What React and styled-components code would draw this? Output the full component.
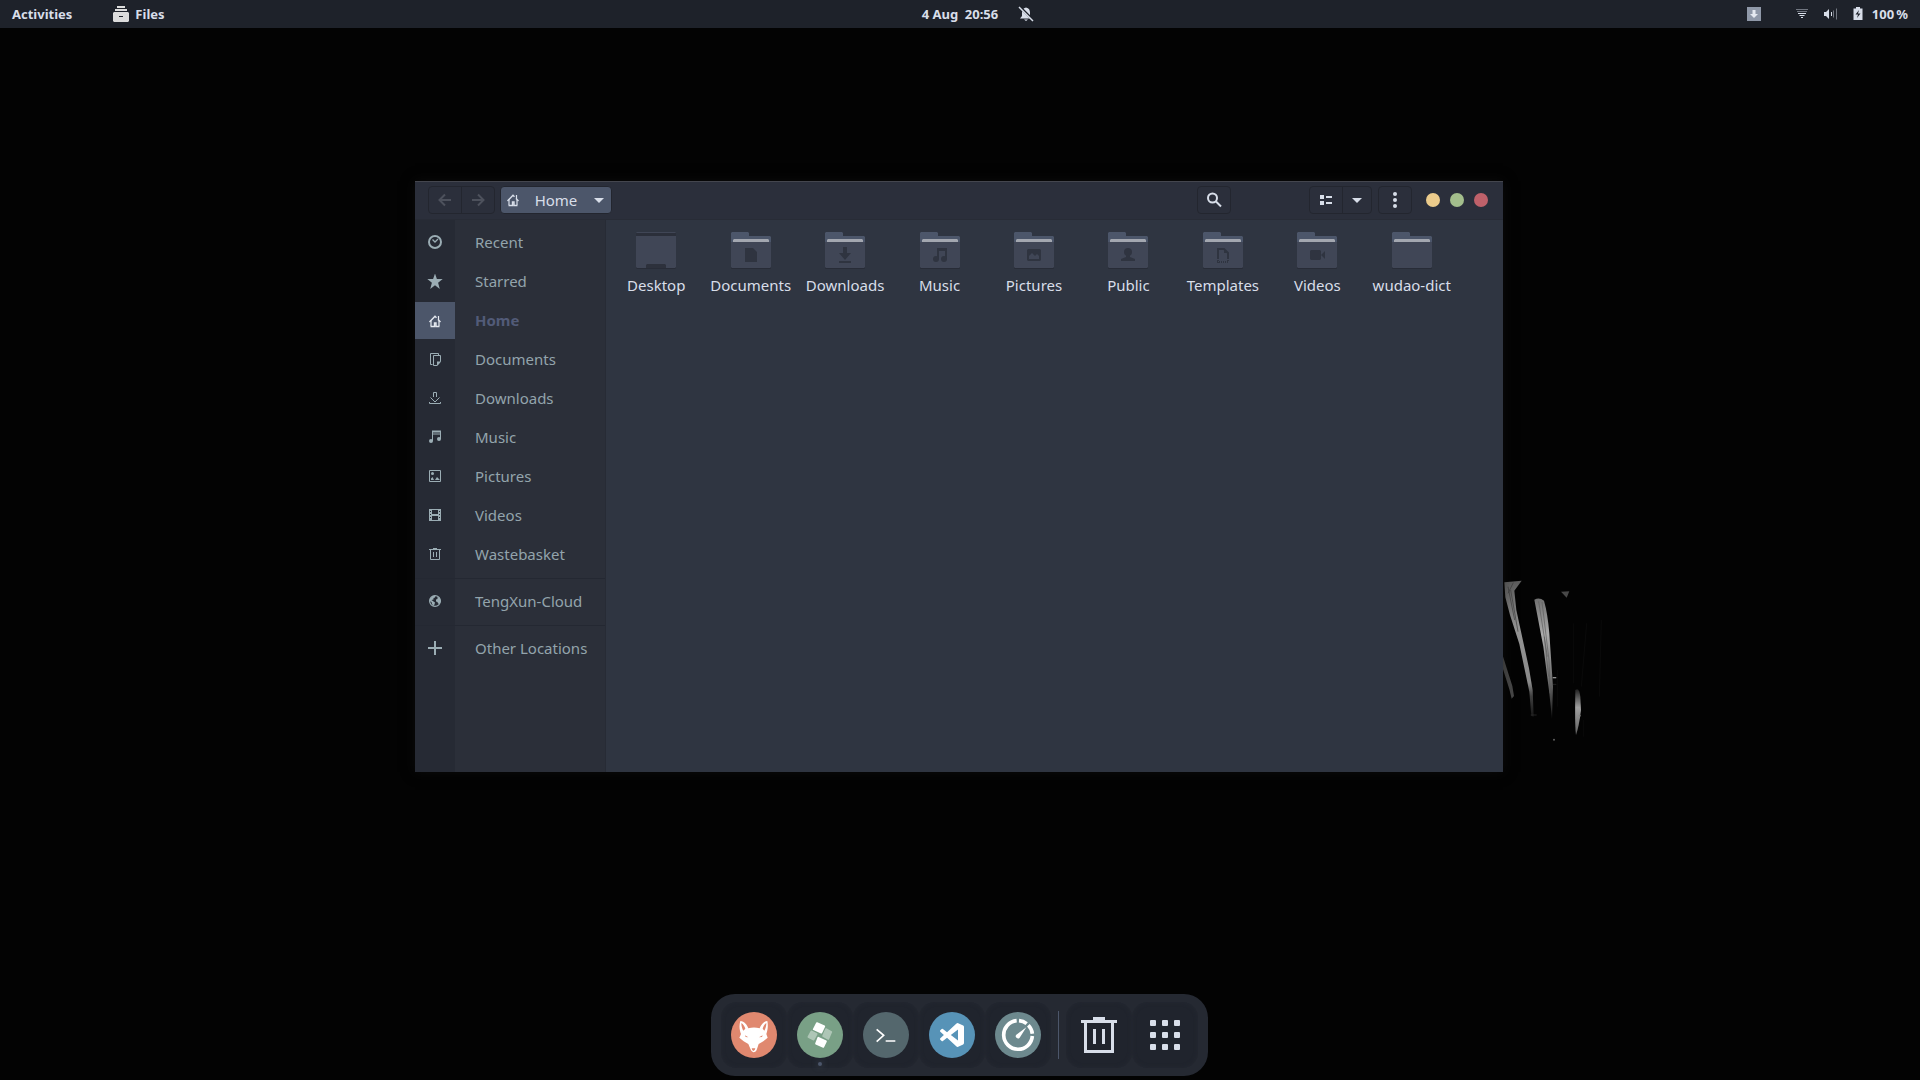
import React from "react";
import styled, { createGlobalStyle } from "styled-components";

const GlobalStyle = createGlobalStyle`
  * { box-sizing: border-box; }
  body { margin: 0; background: #030303; }
  button, a { font: inherit; color: inherit; text-decoration: none; }
  button { margin: 0; padding: 0; border: 0; background: none; cursor: pointer; }
  svg { display: block; flex: none; }
`;

const Screen = styled.div`
  display: flex;
  flex-direction: column;
  min-height: 100vh;
  overflow: hidden;
  background: #030303;
  font-family: "Noto Sans", sans-serif;
  font-size: 15px;
  color: #d8dee9;
`;

/* ---------- top panel ---------- */

const Panel = styled.header`
  display: grid;
  grid-template-columns: 1fr auto 1fr;
  align-items: center;
  height: 28px;
  padding: 0 12px;
  background: #1e222a;
  font-size: 13px;
  font-weight: 700;
  color: #d8dee9;
`;

const PanelGroup = styled.div`
  display: flex;
  align-items: center;
  justify-content: ${(p) => (p.$end ? "flex-end" : "flex-start")};
  gap: ${(p) => p.$gap}px;
`;

const PanelButton = styled.button`
  display: flex;
  align-items: center;
  gap: 6px;
  line-height: 28px;
  white-space: pre;
`;

const Clock = styled(PanelButton)`
  gap: 20px;
  padding-left: 36px;
`;

const TrayGap = styled.span`
  width: 9px;
`;

/* ---------- desktop ---------- */

const Desktop = styled.main`
  position: relative;
  flex: 1;
  display: flex;
  flex-direction: column;
  justify-content: flex-end;
  align-items: center;
  padding: 0 1px 4px 0;
`;

const Wallpaper = styled.svg`
  position: absolute;
  left: 1480px;
  top: 532px;
`;

const Window = styled.section`
  position: absolute;
  left: 415px;
  top: 153px;
  width: calc(100vw - 832px);
  height: calc(100vh - 489px);
  display: flex;
  flex-direction: column;
  background: #2f3541;
  box-shadow: 0 0 12px rgba(20, 20, 20, 0.5);
`;

const HeaderBar = styled.div`
  display: flex;
  align-items: center;
  height: 39px;
  flex: none;
  padding: 0 15px 1px 13px;
  background: #2b2f3b;
  border-top: 1px solid #44464e;
  border-bottom: 1px solid #282c36;
`;

const ButtonGroup = styled.div`
  display: flex;
  height: 28px;
  border: 1px solid #23262f;
  border-radius: 4px;
  margin-right: ${(p) => p.$after || 0}px;
`;

const ToolButton = styled.button`
  display: flex;
  align-items: center;
  justify-content: center;
  width: ${(p) => (p.$narrow ? 28 : 32)}px;
  color: ${(p) => (p.disabled ? "#4d515c" : "#d8dee9")};
  & + & { border-left: 1px solid #23262f; box-sizing: content-box; }
`;

const PathButton = styled.button`
  display: flex;
  align-items: center;
  justify-content: space-between;
  width: 112px;
  height: 28px;
  padding: 0 4px;
  border: 1px solid #23262f;
  border-radius: 4px;
  background: #4c566a;
  color: #d8dee9;
`;

const Spacer = styled.div`
  flex: 1;
`;

const WindowControls = styled.div`
  display: flex;
  gap: 10px;
  margin-left: 14px;
`;

const ControlDot = styled.button`
  width: 14px;
  height: 14px;
  border-radius: 50%;
  background: ${(p) => p.$color};
`;

const Body = styled.div`
  flex: 1;
  display: flex;
  min-height: 0;
`;

const Sidebar = styled.nav`
  display: flex;
  flex-direction: column;
  gap: 2px;
  width: 191px;
  padding-top: 4px;
  border-right: 1px solid #272b35;
  background: linear-gradient(to right, #262a34 40px, #2b2f39 40px);
`;

const Place = styled.a`
  display: grid;
  grid-template-columns: 40px 1fr;
  column-gap: 20px;
  height: 37px;
  line-height: 36px;
  && { color: ${(p) => (p.$active ? "#525b78" : "#93a4ac")}; }
  font-weight: ${(p) => (p.$active ? 700 : 400)};
`;

const PlaceIcon = styled.span`
  display: flex;
  align-items: center;
  justify-content: center;
  padding-top: 1px;
  background: ${(p) => (p.$active ? "#4c566a" : "transparent")};
  color: ${(p) => (p.$active ? "#e5e9f0" : "#9badb4")};
`;

const Divider = styled.hr`
  width: 100%;
  height: 1px;
  margin: 3px 0 2px;
  border: 0;
  background: #242832;
`;

const FileGrid = styled.div`
  flex: 1;
  display: grid;
  grid-template-columns: repeat(auto-fill, minmax(94px, 1fr));
  align-content: start;
  padding: 12px 44px 0 3px;
`;

const FileItem = styled.a`
  display: flex;
  flex-direction: column;
  align-items: center;
  gap: 6px;
  line-height: 20px;
  white-space: nowrap;
`;

/* ---------- dock ---------- */

const Dock = styled.nav`
  display: flex;
  align-items: center;
  padding: 8px 10px;
  border-radius: 24px;
  background: #252932;
`;

const DockButton = styled.button`
  position: relative;
  display: flex;
  align-items: center;
  justify-content: center;
  width: 66px;
  height: 66px;
  border-radius: 16px;
  background: #20242d;
  box-shadow: inset 0 0 4px #252932;
  color: #d8dee9;
`;

const RunningDot = styled.span`
  position: absolute;
  left: 31px;
  bottom: 2px;
  width: 4px;
  height: 4px;
  border-radius: 50%;
  background: #4c566a;
  box-shadow: 0 0 6px #4c566a;
`;

const DockDivider = styled.div`
  width: 1px;
  height: 48px;
  margin: 0 7px;
  background: #4c566a;
`;

/* ---------- icons ---------- */

const Icon = ({ size = 16, children }) => (
  <svg width={size} height={size} viewBox={`0 0 ${size} ${size}`} fill="none" stroke="currentColor" aria-hidden="true">
    {children}
  </svg>
);

const Solid = ({ d }) => <path d={d} fill="currentColor" stroke="none" />;

const HomeGlyph = () => (
  <>
    <path d="M2.5 9 8 3.200l1.500 1.500M13.5 9 11 6.5" strokeWidth="1.4" />
    <path d="M11.5 3v4M4 7.5V13M12 7.500V13" strokeWidth="1.2" />
    <path d="M3.500 13.500h4V10h1.500v3.500h3.500" strokeWidth="1.4" />
  </>
);

const icons = {
  recent: (
    <>
      <circle cx="8" cy="7" r="6" strokeWidth="2" />
      <path d="M5.5 4.5 8 7l3-3" strokeWidth="1.3" />
    </>
  ),
  starred: <Solid d="M8 -0.5 9.9 5H15.7L11.1 8.8 12.8 15 8 11.3 3.2 15 4.9 8.8.3 5H6.1Z" />,
  home: <HomeGlyph />,
  documents: (
    <>
      <path d="M5.500 12.500h-2v-11h8v2M6.500 3.500h7v6l-3.500 4h-3.500z" />
      <Solid d="M10 9.500h4L10 14z" />
    </>
  ),
  downloads: <path d="M6.500 6V1.500h3V6M3.500 6.500 8 11l4.500-4.500M2.500 11v1.500h11V11" />,
  music: (
    <>
      <path d="M5.500 11V1.500h8V9M5.500 4h8" />
      <path d="M5 1.500h9" strokeWidth="2" />
      <circle cx="4" cy="11" r="2" fill="currentColor" stroke="none" />
      <circle cx="12" cy="9" r="2" fill="currentColor" stroke="none" />
    </>
  ),
  pictures: (
    <>
      <path d="M2.500 1.500h11v11h-11z" />
      <circle cx="5.500" cy="4.500" r="1.500" fill="currentColor" stroke="none" />
      <Solid d="M4 11V9.500L5.500 8 7 11zM8 11l2-3 3 3z" />
    </>
  ),
  videos: (
    <path
      fillRule="evenodd"
      fill="currentColor"
      stroke="none"
      d="M2 1h12v12H2zM5 2v4h6V2zM5 8v4h6V8zM3 3v1h1V3zM3 6v1h1V6zM3 9v1h1V9zM12 3v1h1V3zM12 6v1h1V6zM12 9v1h1V9z"
    />
  ),
  trash: <path d="M2 2.500h12M6 1.500h4M3.500 3v9.500h9V3M6.500 5v5M9.500 5v5" />,
  cloud: (
    <>
      <circle cx="8" cy="7" r="5.400" strokeWidth="1.2" />
      <Solid d="M3 4.500 5.500 2 8.500 1.500 8 3.500 6.500 4 6.500 5.500 4.500 6 6.500 7.500 8 8.500 7.500 10.500 6.500 12 5 10 4.500 8 2.500 7ZM10.500 3l2 .5 1.500 3.500-1.500 3-1.500-.500L10.500 8 9 7.500 9 5.500 10.500 5Z" />
    </>
  ),
  plus: <path d="M1 7h14M8 0v14" strokeWidth="2" />,
};

const glyphs = {
  documents: <path d="M14 16h8l4 4v10H14z" />,
  downloads: <path d="M18 15h4v6h4l-6 7-6-7h4zM14 29h12v2H14z" />,
  music: (
    <>
      <path d="M17 16h10v11h-2v-8h-6v8h-2z" />
      <circle cx="16" cy="27" r="3" />
      <circle cx="24" cy="27" r="3" />
    </>
  ),
  pictures: <path fillRule="evenodd" d="M14 17h12l1 1v10l-1 1H14l-1-1V18zM15 27h10v-3l-2-2-2 2-3-3-3 3z" />,
  public: (
    <>
      <circle cx="20" cy="20" r="4" />
      <path d="M18 22h4v3l5 2v2H13v-2l5-2z" />
    </>
  ),
  templates: (
    <>
      <path d="M15 26v-9h6l4 4v5" fill="none" stroke="#2f3440" strokeWidth="2" />
      <path d="M21 17v4h4z" />
      <path d="M15 26v5M14 30h12M25 26v4" fill="none" stroke="#2f3440" strokeWidth="2" strokeDasharray="1 1" />
    </>
  ),
  videos: <path d="M14 18h9l1 1v8l-1 1h-9l-1-1v-8zM24 23l4-4v8z" />,
};

const FolderArt = ({ glyph }) => (
  <svg width="40" height="37" viewBox="0 0 40 37" aria-hidden="true">
    <path d="M0 12h40v24a1 1 0 0 1-1 1H1a1 1 0 0 1-1-1z" fill="#282c37" />
    <path d="M1 0h16l1 1v3h21l1 1v8H0V1z" fill="#4c566a" />
    <path d="M3 7h34l1 1v3H2V8z" fill="#a3a7b0" />
    <path d="M0 10h40v25l-1 1H1l-1-1z" fill="#404656" />
    <g fill="#2f3440">{glyphs[glyph]}</g>
  </svg>
);

const DesktopArt = () => (
  <svg width="40" height="37" viewBox="0 0 40 37" aria-hidden="true">
    <path d="M0 12h40v24l-1 1H1l-1-1z" fill="#282c37" />
    <path d="M1 0h38l1 1v3H0V1z" fill="#404656" />
    <path d="M0 1h40v3H0z" fill="#2b2f3a" />
    <path d="M0 4h40v31l-1 1H1l-1-1z" fill="#404656" />
    <path d="M11 32h18l1 1v3H10v-3z" fill="#2d313c" />
  </svg>
);

const AppArt = ({ color, children }) => (
  <svg width="46" height="46" viewBox="0 0 138 138" aria-hidden="true">
    <circle cx="69" cy="69" r="69" fill={color} />
    {children}
  </svg>
);

const Caret = () => (
  <Icon>
    <Solid d="M3 6h10l-5 5z" />
  </Icon>
);

/* ---------- data ---------- */

const places = [
  ["recent", "Recent"],
  ["starred", "Starred"],
  ["home", "Home"],
  ["documents", "Documents"],
  ["downloads", "Downloads"],
  ["music", "Music"],
  ["pictures", "Pictures"],
  ["videos", "Videos"],
  ["trash", "Wastebasket"],
  null,
  ["cloud", "TengXun-Cloud"],
  null,
  ["plus", "Other Locations"],
];

const files = [
  ["desktop", "Desktop"],
  ["documents", "Documents"],
  ["downloads", "Downloads"],
  ["music", "Music"],
  ["pictures", "Pictures"],
  ["public", "Public"],
  ["templates", "Templates"],
  ["videos", "Videos"],
  ["plain", "wudao-dict"],
];

/* ---------- sections ---------- */

const TopPanel = () => (
  <Panel>
    <PanelGroup $gap={41}>
      <PanelButton>Activities</PanelButton>
      <PanelButton>
        <Icon>
          <g fill="#dcdcdc" stroke="none">
            <path d="M4 0h8v2H4zM2 3h12v2H2z" />
            <path fillRule="evenodd" d="M1 6h14l1 1v8l-1 1H1l-1-1V7zM6 10v1h4v-1z" />
          </g>
        </Icon>
        Files
      </PanelButton>
    </PanelGroup>
    <Clock>
      {"4 Aug\u2002" + "20:56"}
      <Icon>
        <Solid d="M8 1.500C5 2 4 4 4 7v3l-2 2.500h12L12 10V7c0-3-1-5-4-5.500zM6 13.500h4L8 15z" />
        <path d="M1 0l14 14" stroke="#1e222a" strokeWidth="2.500" />
        <path d="M1 1l14 14" strokeWidth="1.500" />
      </Icon>
    </Clock>
    <PanelGroup $end $gap={12} aria-label="System status">
      <Icon size={14}>
        <path d="M0 0h14v14H0z" fill="#8f98a8" stroke="none" />
        <path d="M5.500 3h3v4H11l-4 4-4-4h2.500z" fill="#e5e9f0" stroke="none" />
      </Icon>
      <TrayGap />
      <Icon>
        <path d="M2 3.500h12M3 5.500h10" opacity=".45" />
        <path d="M4 7.500h8M5.500 9.500h5M7 11.500h2" />
      </Icon>
      <Icon>
        <Solid d="M2 6h2l3-3v10L4 10H2z" />
        <path d="M9.500 6v4" />
        <path d="M11.500 4.500v7M14.500 2.500v11" opacity=".45" />
      </Icon>
      <PanelButton>
        <Icon>
          <Solid d="M6 1h4v1.500h2.500V14h-9V2.500H6z" />
          <path d="M9 4 5.500 8.500H8L7 12l3.500-4.500H8z" fill="#1e222a" stroke="none" />
        </Icon>
        {"100\u2009%"}
      </PanelButton>
    </PanelGroup>
  </Panel>
);

const FilesWindow = () => (
  <Window aria-label="Files">
    <HeaderBar>
      <ButtonGroup $after={5}>
        <ToolButton aria-label="Back" disabled>
          <Icon>
            <path d="M14 8H3M8 2.500 2.500 8 8 13.500" strokeWidth="2" />
          </Icon>
        </ToolButton>
        <ToolButton aria-label="Forward" disabled>
          <Icon>
            <path d="M2 8h11M8 2.500 13.500 8 8 13.500" strokeWidth="2" />
          </Icon>
        </ToolButton>
      </ButtonGroup>
      <PathButton>
        <Icon>
          <HomeGlyph />
        </Icon>
        Home
        <Caret />
      </PathButton>
      <Spacer />
      <ButtonGroup $after={78}>
        <ToolButton aria-label="Search">
          <Icon>
            <circle cx="6.500" cy="6" r="4.500" strokeWidth="2" />
            <path d="M10 9.500l5 5" strokeWidth="2" />
          </Icon>
        </ToolButton>
      </ButtonGroup>
      <ButtonGroup $after={6}>
        <ToolButton aria-label="List view">
          <Icon>
            <Solid d="M2 3h4v4H2zM2 9h4v4H2zM8 4h6v2H8zM8 10h6v2H8z" />
          </Icon>
        </ToolButton>
        <ToolButton $narrow aria-label="View options">
          <Caret />
        </ToolButton>
      </ButtonGroup>
      <ButtonGroup>
        <ToolButton aria-label="Menu">
          <Icon>
            <g fill="currentColor" stroke="none">
              <circle cx="8" cy="2" r="2" />
              <circle cx="8" cy="8" r="2" />
              <circle cx="8" cy="14" r="2" />
            </g>
          </Icon>
        </ToolButton>
      </ButtonGroup>
      <WindowControls>
        <ControlDot $color="#ebcb8b" aria-label="Minimise" />
        <ControlDot $color="#a3be8c" aria-label="Maximise" />
        <ControlDot $color="#bf616a" aria-label="Close" />
      </WindowControls>
    </HeaderBar>
    <Body>
      <Sidebar>
        {places.map((place, i) =>
          place ? (
            <Place key={place[0]} href="#" $active={place[0] === "home"}>
              <PlaceIcon $active={place[0] === "home"}>
                <Icon>{icons[place[0]]}</Icon>
              </PlaceIcon>
              {place[1]}
            </Place>
          ) : (
            <Divider key={i} />
          )
        )}
      </Sidebar>
      <FileGrid>
        {files.map(([kind, name]) => (
          <FileItem key={name} href="#">
            {kind === "desktop" ? <DesktopArt /> : <FolderArt glyph={kind} />}
            {name}
          </FileItem>
        ))}
      </FileGrid>
    </Body>
  </Window>
);

const BrushStrokes = () => (
  <Wallpaper width="130" height="220" viewBox="0 0 390 660" aria-hidden="true">
    <defs>
      <linearGradient id="fadeA" x1="0" y1="0" x2="0" y2="1">
        <stop offset="0" stopColor="#5c5c5c" />
        <stop offset=".35" stopColor="#949494" />
        <stop offset=".75" stopColor="#8a8a8a" />
        <stop offset=".85" stopColor="#404040" />
        <stop offset="1" stopColor="#161616" />
      </linearGradient>
      <linearGradient id="fadeB" x1="0" y1="0" x2="0" y2="1">
        <stop offset="0" stopColor="#707070" />
        <stop offset=".3" stopColor="#acacac" />
        <stop offset=".65" stopColor="#747474" />
        <stop offset="1" stopColor="#1a1a1a" />
      </linearGradient>
      <linearGradient id="fadeC" x1="0" y1="0" x2="0" y2="1">
        <stop offset="0" stopColor="#202020" />
        <stop offset=".4" stopColor="#a0a0a0" />
        <stop offset="1" stopColor="#606060" />
      </linearGradient>
    </defs>
    <path d="M73 67 125 62 103 92 109 150 122 210 147 325 158 390 161 470 154 468 148 395 118 252 90 165 76 112Z" fill="url(#fadeA)" />
    <path d="M84 80 104 180M92 90 114 215M100 68 84 100" stroke="#3c3c3c" strokeWidth="2" fill="none" />
    <path d="M163 119Q178 110 192 122 203 160 208 220L219 380 216 476 208 400 190 260Z" fill="url(#fadeB)" />
    <path d="M176 124 202 290M186 126 207 300 210 400M193 230 206 350" stroke="#5c5c5c" strokeWidth="2" fill="none" />
    <path d="M66 280 97 378 102 408 95 416 88 388 66 318Z" fill="#484848" />
    <path d="M243 95 268 94 260 113Z" fill="#484848" />
    <path d="M286 390Q298 380 301 410L303 450Q297 500 288 525 284 500 286 390Z" fill="url(#fadeC)" />
    <path d="M218 353h11" stroke="#909090" strokeWidth="4" />
    <path d="M219 373h10M152 465h18" stroke="#333" strokeWidth="2" />
    <circle cx="222" cy="539" r="3" fill="#606060" />
    <circle cx="299" cy="467" r="3" fill="#808080" />
    <path d="M281 190v180M320 190 304 380M364 180l-6 230M232 330v110M310 480v50" stroke="#0a0a0a" strokeWidth="3" fill="none" />
  </Wallpaper>
);

const AppDock = () => (
  <Dock aria-label="Dock">
    <DockButton aria-label="Firefox">
      <AppArt color="#e0886f">
        <path
          d="M28 27C40 28 48 38 52 49Q69 44 86 49C90 38 98 28 109 27 112 40 110 54 106 66L110 77 97 88 83 96 78 111Q75 121 67 121 61 119 58 110L52 96 38 88 25 77 30 66C25 54 24 40 28 27Z"
          fill="#fff"
        />
        <path d="M31 33C37 37 41 43 43 50L37 56C33 49 31 42 31 33ZM106 33C100 37 97 43 95 50L100 56C104 49 106 42 106 33ZM42 70 52 76 44 75ZM95 70 84 76 93 75ZM62 109H73Q72 116 67 117 63 116 62 109Z" fill="#e0886f" />
      </AppArt>
    </DockButton>
    <DockButton aria-label="Files">
      <AppArt color="#79a086">
        <g fill="#fff" stroke="#fff" strokeWidth="5" strokeLinejoin="round">
          <path d="M60 33 82 43 73 62 50 52ZM64 77 87 88 79 105 57 95Z" />
          <path d="M43 58 59 66 50 83 34 75ZM87 51 103 60 94 81 78 72Z" opacity=".4" />
        </g>
      </AppArt>
      <RunningDot />
    </DockButton>
    <DockButton aria-label="Terminal">
      <AppArt color="#54676d">
        <path d="M41 52 62 70 41 89M68 87H97" fill="none" stroke="#fff" strokeWidth="5" />
      </AppArt>
    </DockButton>
    <DockButton aria-label="Visual Studio Code">
      <AppArt color="#5793b7">
        <path
          transform="translate(33 33) scale(3)"
          fill="#fff"
          d="M23.15 2.587L18.21.21a1.494 1.494 0 0 0-1.705.29l-9.46 8.63-4.12-3.128a.999.999 0 0 0-1.276.057L.327 7.261A1 1 0 0 0 .326 8.74L3.899 12 .326 15.26a1 1 0 0 0 .001 1.479L1.65 17.94a.999.999 0 0 0 1.276.057l4.12-3.128 9.46 8.63a1.492 1.492 0 0 0 1.704.29l4.942-2.377A1.5 1.5 0 0 0 24 20.06V3.939a1.5 1.5 0 0 0-.85-1.352zm-5.146 14.861L10.826 12l7.178-5.448v10.896z"
        />
      </AppArt>
    </DockButton>
    <DockButton aria-label="System Monitor">
      <AppArt color="#6d898e">
        <g fill="none" stroke="#fff" strokeWidth="11">
          <path d="M112 72A43 43 0 1 1 65 26" />
          <path d="M72 26A43 43 0 0 1 95 35M100 40A43 43 0 0 1 112 65" />
        </g>
        <path d="M94 46 74 77A6 6 0 0 1 64 68Z" fill="#fff" />
      </AppArt>
    </DockButton>
    <DockDivider />
    <DockButton aria-label="Wastebasket">
      <Icon size={36}>
        <path d="M0 4.500h36M12 1.500h12M4.500 5v29.500h27V5M13.500 12v15M22.500 12v15" strokeWidth="3" />
      </Icon>
    </DockButton>
    <DockButton aria-label="Show applications">
      <Icon size={30}>
        {[0, 12, 24].map((y) =>
          [0, 12, 24].map((x) => (
            <rect key={`${x}-${y}`} x={x} y={y} width="6" height="6" rx="1" fill="currentColor" stroke="none" />
          ))
        )}
      </Icon>
    </DockButton>
  </Dock>
);

export default function App() {
  return (
    <Screen>
      <GlobalStyle />
      <TopPanel />
      <Desktop>
        <BrushStrokes />
        <FilesWindow />
        <AppDock />
      </Desktop>
    </Screen>
  );
}
